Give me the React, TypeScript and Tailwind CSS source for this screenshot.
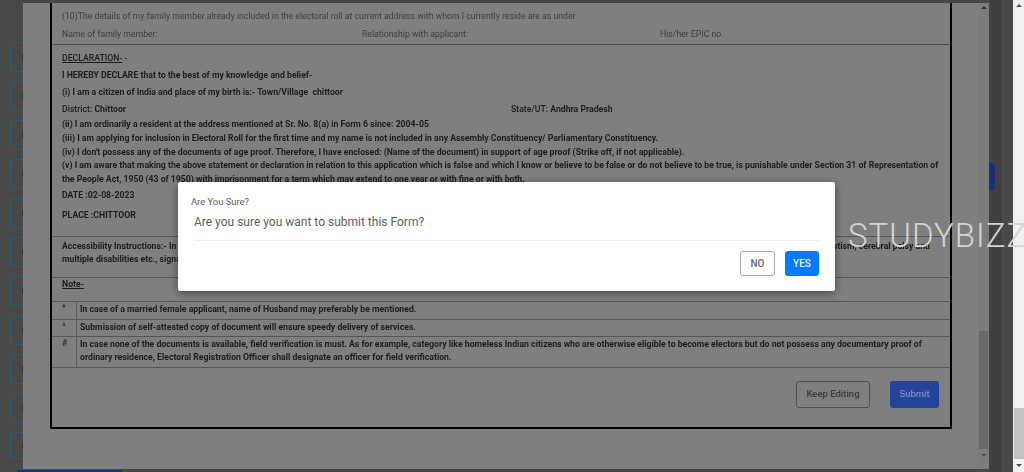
const font = { fontFamily: "Roboto, 'Liberation Sans', sans-serif" };

function Line({ h, children, className = "" }: { h: string; children: React.ReactNode; className?: string }) {
  return <div className={`flex items-center whitespace-nowrap px-[10px] ${h} ${className}`}>{children}</div>;
}

const stubs = ["h-[30px]", "h-[30px]", "h-[30px]", "h-[30px]", "h-[30px]", "h-[30px]", "h-[30px]", "h-[30px]", "h-[30px]", "h-[30px]", "h-[27px]"];

function NoteRow({ mark, children, h }: { mark: string; children: React.ReactNode; h: string }) {
  return (
    <div className={`flex ${h} border-b border-[#555555]`}>
      <div className="w-[25px] shrink-0 border-r border-[#5a5a5a] pl-[10px] text-[#2a2a2a]">{mark}</div>
      <div className="flex flex-col justify-center pb-[2px] pl-[3px] leading-[13px] whitespace-nowrap">{children}</div>
    </div>
  );
}

export default function App() {
  return (
    <div
      className="relative flex h-[472px] w-[1024px] overflow-hidden bg-[#484848] text-[8.7px] text-[#1c1c1c]"
      style={font}
    >
      {/* page behind the modal, left side */}
      <div className="flex w-[23px] shrink-0 flex-col gap-[9px] pt-[42px] pl-[10px]">
        {stubs.map((h, i) => (
          <div key={i} className={`${h} flex items-center justify-end rounded-l-[3px] border border-r-0 border-[#2e5a70]`}>
            <div className="h-[6px] w-[1px] bg-[#303030]" />
          </div>
        ))}
      </div>

      {/* modal panel */}
      <div className="mt-[3px] flex h-[466px] w-[966px] shrink-0 bg-[#7f7f7f] blur-[0.35px]">
        <div className="w-[955px] shrink-0 pl-[27px]">
          <div className="flex h-[426px] w-[902px] flex-col border-x-2 border-b-2 border-black font-medium">
            <Line h="h-[23px]" className="pt-[4px] font-normal text-[#3e3e3e]">
              (10)The details of my family member already included in the electoral roll at current address with whom I currently reside are as under
            </Line>
            <div className="grid h-[19px] grid-cols-[300px_298px_1fr] items-center border-b border-[#4e4e4e] px-[10px] pb-[1px] font-normal text-[#3e3e3e]">
              <span>Name of family member:</span>
              <span>Relationship with applicant:</span>
              <span>His/her EPIC no.</span>
            </div>
            <Line h="h-[23px]" className="pt-[4px]">
              <span className="underline">DECLARATION-</span>&nbsp;-
            </Line>
            <Line h="h-[16px]" className="font-bold">I HEREBY DECLARE that to the best of my knowledge and belief-</Line>
            <Line h="h-[17px]" className="font-bold">(i) I am a citizen of India and place of my birth is:- Town/Village&nbsp; chittoor</Line>
            <div className="grid h-[17px] grid-cols-[449px_1fr] items-center px-[10px] font-bold">
              <span><span className="font-medium">District:</span> Chittoor</span>
              <span><span className="font-medium">State/UT:</span> Andhra Pradesh</span>
            </div>
            <Line h="h-[14px]" className="font-bold">(ii) I am ordinarily a resident at the address mentioned at Sr. No. 8(a) in Form 6 since: 2004-05</Line>
            <Line h="h-[14px]" className="font-bold">(iii) I am applying for inclusion in Electoral Roll for the first time and my name is not included in any Assembly Constituency/ Parliamentary Constituency.</Line>
            <Line h="h-[13px]" className="font-bold">(iv) I don't possess any of the documents of age proof. Therefore, I have enclosed: (Name of the document) in support of age proof (Strike off, if not applicable).</Line>
            <Line h="h-[13px]" className="font-bold">(v) I am aware that making the above statement or declaration in relation to this application which is false and which I know or believe to be false or do not believe to be true, is punishable under Section 31 of Representation of</Line>
            <Line h="h-[15px]" className="font-bold">the People Act, 1950 (43 of 1950) with imprisonment for a term which may extend to one year or with fine or with both.</Line>
            <Line h="h-[18px]" className="font-bold">DATE :02-08-2023</Line>
            <Line h="h-[22px]" className="font-bold">PLACE :CHITTOOR</Line>
            <div className="h-[10px] border-b border-[#555555]" />
            <div className="flex h-[16px] items-center justify-between whitespace-nowrap pr-[20px] pl-[10px] pt-[3px] font-bold">
              <span>Accessibility Instructions:- In case of persons with disabilities</span>
              <span>autism, cerebral palsy and</span>
            </div>
            <Line h="h-[13px]" className="font-bold">multiple disabilities etc., signature</Line>
            <div className="h-[12px] border-b border-[#555555]" />
            <Line h="h-[24px]" className="items-start border-b border-[#555555] font-bold">
              <span className="underline">Note-</span>
            </Line>
            <NoteRow mark="*" h="h-[18px]"><span className="font-bold">In case of a married female applicant, name of Husband may preferably be mentioned.</span></NoteRow>
            <NoteRow mark="^" h="h-[17px]"><span className="font-bold">Submission of self-attested copy of document will ensure speedy delivery of services.</span></NoteRow>
            <NoteRow mark="#" h="h-[31px]">
              <span className="font-bold">In case none of the documents is available, field verification is must. As for example, category like homeless Indian citizens who are otherwise eligible to become electors but do not possess any documentary proof of</span>
              <span className="font-bold">ordinary residence, Electoral Registration Officer shall designate an officer for field verification.</span>
            </NoteRow>
            <div className="flex justify-end gap-[20px] pt-[13px] pr-[11px] text-[9.5px]">
              <button className="flex h-[27px] w-[74px] items-center justify-center rounded-[3px] border border-[#4e4e4e] text-[#3a3a3a]">Keep Editing</button>
              <button className="flex h-[27px] w-[49px] items-center justify-center rounded-[3px] bg-[#24439a] text-[#7f8db8]">Submit</button>
            </div>
          </div>
        </div>
        {/* inner scrollbar */}
        <div className="flex w-[11px] shrink-0 flex-col items-center bg-[#7c7c7c]">
          <div className="mt-[3px] mb-[322px] h-0 w-0 border-x-[3px] border-b-[3px] border-x-transparent border-b-[#2e2e2e]" />
          <div className="h-[118px] w-[9px] bg-[#686868]" />
          <div className="mt-[5px] h-0 w-0 border-x-[3px] border-t-[3px] border-x-transparent border-t-[#555555]" />
        </div>
      </div>

      {/* page behind the modal, right side */}
      <div className="flex w-[24px] shrink-0 bg-[#404040]">
        <div className="flex w-[13px] flex-col pt-[163px]">
          <div className="h-[27px] w-[6px] rounded-r-[2px] bg-[#1c3076]" />
        </div>
        <div className="w-[11px] bg-[#494949]" />
      </div>

      {/* page scrollbar */}
      <div className="flex w-[11px] shrink-0 flex-col items-center bg-[#f1f1f1]">
        <div className="mt-[4px] mb-[401px] h-0 w-0 border-x-[3px] border-b-[3px] border-x-transparent border-b-[#505050]" />
        <div className="h-[51px] w-[10px] bg-[#c1c1c1]" />
        <div className="mt-[5px] h-0 w-0 border-x-[3px] border-t-[3px] border-x-transparent border-t-[#505050]" />
      </div>

      {/* confirm dialog */}
      <div className="absolute top-[182px] left-[178px] flex h-[109px] w-[657px] flex-col rounded-[2px] bg-white pt-[13px] pr-[16px] pl-[13px] shadow-[0_2px_8px_rgba(0,0,0,0.45)]">
        <div className="text-[9.4px] leading-[14px] text-[#5a5a5a]">Are You Sure?</div>
        <div className="mt-[2px] ml-[3px] border-b border-[#f0f0f0] pt-[2px] pb-[9px] text-[12px] leading-[18px] text-[#5e5e5e]">
          Are you sure you want to submit this Form?
        </div>
        <div className="mt-[10px] flex justify-end gap-[10px] text-[10px] font-medium">
          <button className="flex h-[25px] w-[35px] items-center justify-center rounded-[3px] border border-[#a8a8a8] text-[#666666]">NO</button>
          <button className="flex h-[25px] w-[34px] items-center justify-center rounded-[3px] bg-[#007bff] text-[#e6f2ff]">YES</button>
        </div>
      </div>

      {/* watermark */}
      <div className="absolute top-[218px] left-[848px] whitespace-nowrap text-[33px] leading-[36px] font-light tracking-[1px] text-[#d4d4d4]">
        STUDYBIZZ
      </div>

      {/* strip at the bottom edge */}
      <div className="absolute top-[470px] left-[17px] h-[2px] w-[105px] bg-[#1c3076]" />
    </div>
  );
}
